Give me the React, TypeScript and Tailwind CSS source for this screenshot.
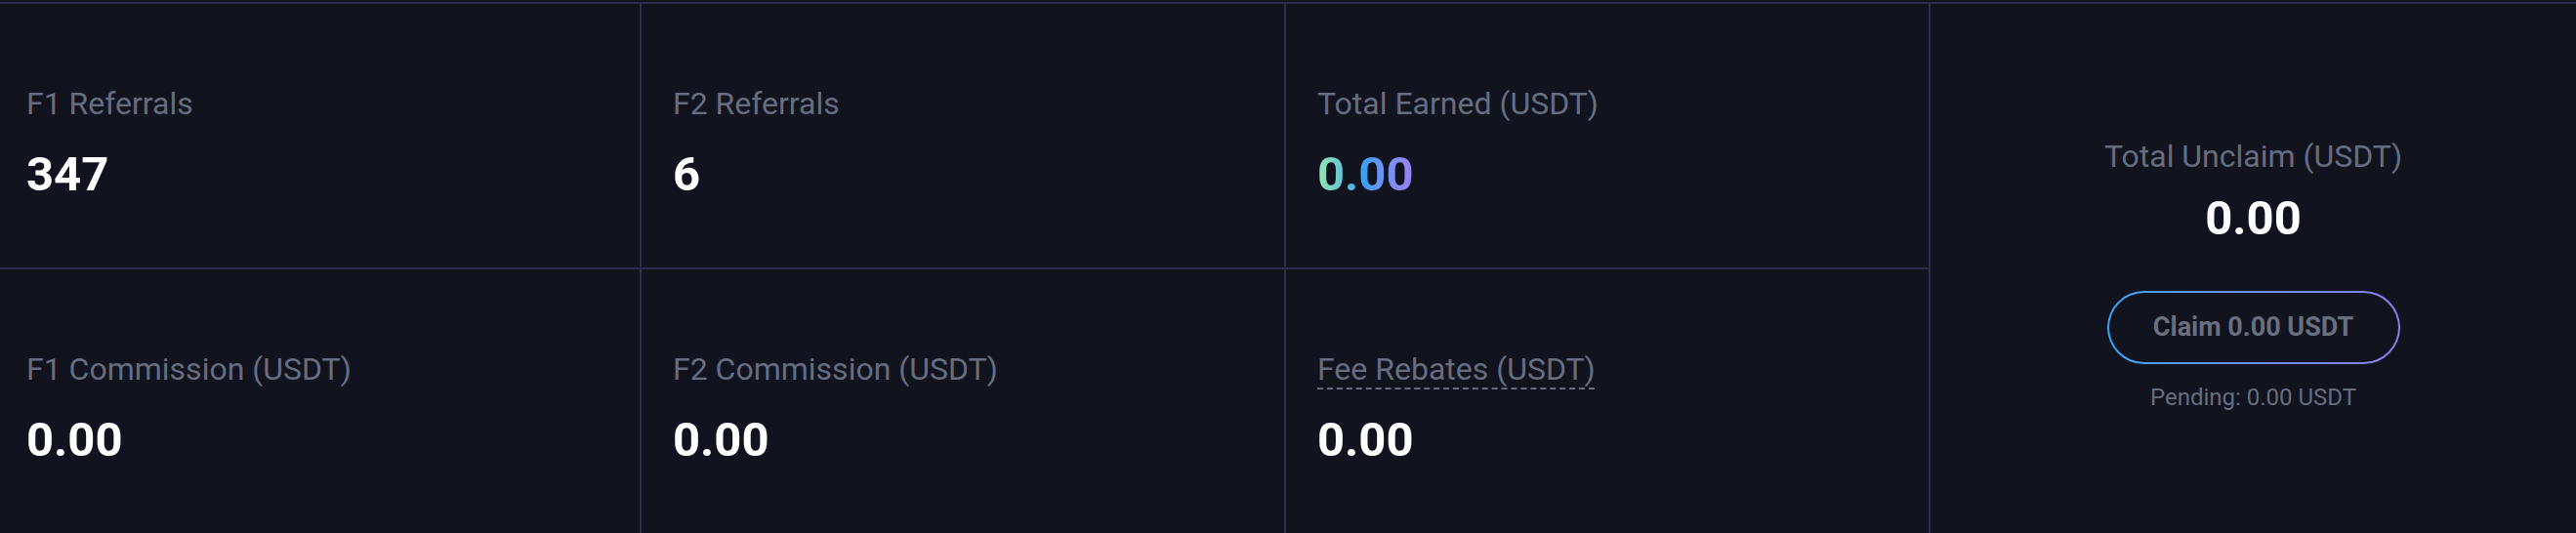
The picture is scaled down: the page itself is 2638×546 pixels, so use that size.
import React from 'react';

type Stat = {
  label: string;
  value: string;
  gradient?: boolean;
  dashed?: boolean;
};

const topRow: Stat[] = [
  { label: 'F1 Referrals', value: '347' },
  { label: 'F2 Referrals', value: '6' },
  { label: 'Total Earned (USDT)', value: '0.00', gradient: true },
];

const bottomRow: Stat[] = [
  { label: 'F1 Commission (USDT)', value: '0.00' },
  { label: 'F2 Commission (USDT)', value: '0.00' },
  { label: 'Fee Rebates (USDT)', value: '0.00', dashed: true },
];

const StatCell = ({ stat, first }: { stat: Stat; first: boolean }) => {
  return (
    <div
      className={
        first
          ? 'flex h-[270px] flex-col justify-center pl-[27px] pt-[10px]'
          : 'flex h-[270px] flex-col justify-center border-l-2 border-[#2a2e47] pl-[32px] pt-[10px]'
      }
    >
      <div className="text-[32px] leading-[48px] text-[#676d80]">
        {stat.dashed ? (
          <span className="underline decoration-[#676d80] decoration-dashed decoration-[2px] underline-offset-[9px]">
            {stat.label}
          </span>
        ) : (
          stat.label
        )}
      </div>
      <div className="mt-[21px] text-[49px] font-bold leading-[56px] text-white">
        {stat.gradient ? (
          <span className="bg-gradient-to-r from-[#94e8ad] via-[#3d9df3] to-[#9c80ef] bg-clip-text text-transparent">
            {stat.value}
          </span>
        ) : (
          stat.value
        )}
      </div>
    </div>
  );
};

export default function App() {
  return (
    <div
      className="h-[546px] w-full overflow-hidden bg-[#11131e] pt-[2px]"
      style={{ fontFamily: 'Roboto, "Liberation Sans", sans-serif' }}
    >
      <div className="grid h-[544px] grid-cols-[655px_660px_660px_1fr] border-t-2 border-[#2a2e47]">
        <div className="col-span-3 flex flex-col">
          <div className="grid grid-cols-[655px_660px_660px]">
            {topRow.map((stat, i) => (
              <StatCell key={stat.label} stat={stat} first={i === 0} />
            ))}
          </div>
          <div className="grid grid-cols-[655px_660px_660px] border-t-2 border-[#2a2e47]">
            {bottomRow.map((stat, i) => (
              <StatCell key={stat.label} stat={stat} first={i === 0} />
            ))}
          </div>
        </div>

        <div className="flex flex-col items-center justify-center border-l-2 border-[#2a2e47] pt-[8px]">
          <div className="text-[32px] leading-[48px] text-[#676d80]">Total Unclaim (USDT)</div>
          <div className="mt-[12px] text-[49px] font-bold leading-[56px] text-white">0.00</div>
          <div className="mt-[46px] rounded-full bg-gradient-to-r from-[#36a4f2] to-[#8b7de9] p-[2px]">
            <button className="flex h-[71px] w-[296px] items-center justify-center rounded-full bg-[#11131e] text-[27px] font-bold text-[#6a6f80]">
              Claim 0.00 USDT
            </button>
          </div>
          <div className="mt-[18px] text-[24px] leading-[32px] text-[#676d80]">Pending: 0.00 USDT</div>
        </div>
      </div>
    </div>
  );
}
